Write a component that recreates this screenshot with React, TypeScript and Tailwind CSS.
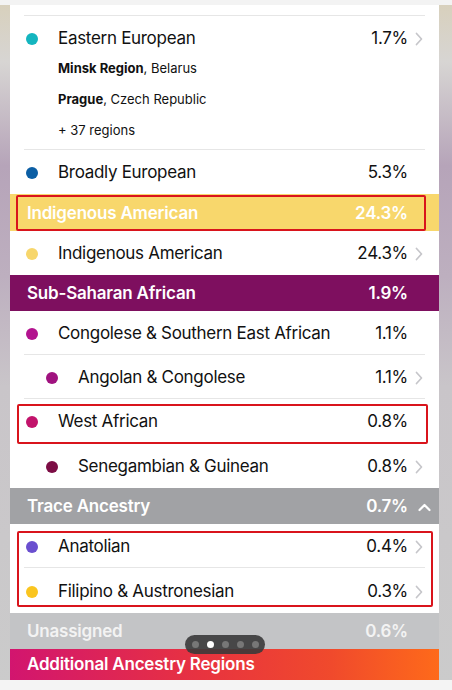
type Row = {
  name: string;
  pct: string;
  dot: string;
  indent?: boolean;
  chevron?: boolean;
  line?: boolean;
  tall?: boolean;
};

function Dot({ color }: { color: string }) {
  return <span className="w-[12px] h-[12px] min-w-[12px] rounded-full shrink-0" style={{ backgroundColor: color }} />;
}

function Chevron() {
  return (
    <svg width="8" height="14" viewBox="0 0 8 14" fill="none">
      <polyline points="1.5,1.5 6.5,7 1.5,12.5" stroke="#c6c6ca" strokeWidth="1.7" strokeLinecap="round" strokeLinejoin="round" />
    </svg>
  );
}

function Pct({ value, chevron }: { value: string; chevron?: boolean }) {
  return (
    <div className="flex items-center ml-auto">
      <span className="text-[17px] tracking-[-0.3px] text-[#111]">{value}</span>
      <span className="w-[31px] flex items-center pl-[7px]">{chevron && <Chevron />}</span>
    </div>
  );
}

function RegionRow({ row }: { row: Row }) {
  return (
    <div className={`relative flex items-center pt-[2px] ${row.tall ? "h-[45px]" : "h-[44px]"}`}>
      <div className={`flex items-center gap-[20px] ${row.indent ? "pl-[36px]" : "pl-[16px]"}`}>
        <Dot color={row.dot} />
        <span className="text-[17px] tracking-[-0.3px] text-[#111]">{row.name}</span>
      </div>
      <Pct value={row.pct} chevron={row.chevron} />
      {row.line && <div className="absolute left-[14px] right-[14px] bottom-0 h-px bg-[#e6e6e6]" />}
    </div>
  );
}

function Band({
  name,
  pct,
  className,
  textClass = "text-white",
  up,
}: {
  name: string;
  pct: string;
  className: string;
  textClass?: string;
  up?: boolean;
}) {
  return (
    <div className={`flex items-center pl-[17px] pt-[2px] ${className}`}>
      <span className={`text-[17px] font-semibold tracking-[-0.2px] ${textClass}`}>{name}</span>
      <div className="flex items-center ml-auto">
        <span className={`text-[17px] font-semibold tracking-[-0.2px] ${textClass}`}>{pct}</span>
        <span className="w-[31px] flex items-center pl-[10px]">
          {up && (
            <svg width="13" height="9" viewBox="0 0 13 9" fill="none">
              <polyline points="1.5,7 6.5,2 11.5,7" stroke="#fff" strokeWidth="2.2" strokeLinecap="round" strokeLinejoin="round" />
            </svg>
          )}
        </span>
      </div>
    </div>
  );
}

function RedBox({ className }: { className: string }) {
  return <div className={`absolute border-2 border-[#d9141c] rounded-[2px] pointer-events-none ${className}`} />;
}

export default function App() {
  return (
    <div
      className="relative w-[452px] h-[690px] overflow-hidden flex flex-col bg-[linear-gradient(180deg,#d8d0bb_0%,#d7d5d3_9%,#b6a4b9_24%,#bdafbf_40%,#c9c5c9_56%,#cbcbcb_100%)]"
      style={{ fontFamily: "Inter, 'Liberation Sans', sans-serif" }}
    >
      <div className="h-[5px] bg-[#f3f3f3] shrink-0" />
      <div className="flex-1 pl-[10px] pr-[13px] flex flex-col">
        <div className="bg-white flex flex-col flex-1">
          <div className="h-[10px]" />
          <div className="mx-[14px] h-px bg-[#e6e6e6]" />

          {/* Eastern European */}
          <div className="relative">
            <div className="h-[44px] flex items-center pt-[2px]">
              <div className="flex items-center pl-[16px] gap-[20px]">
                <Dot color="#14b5bf" />
                <span className="text-[17px] tracking-[-0.3px] text-[#111]">Eastern European</span>
              </div>
              <Pct value="1.7%" chevron />
            </div>
            <div className="pl-[48px] flex flex-col gap-[15px] pb-[11px] text-[13px] leading-[16px] text-[#111]">
              <div>
                <span className="font-bold">Minsk Region</span>, Belarus
              </div>
              <div>
                <span className="font-bold">Prague</span>, Czech Republic
              </div>
              <div>+ 37 regions</div>
            </div>
            <div className="mx-[14px] h-px bg-[#e6e6e6]" />
          </div>

          <RegionRow row={{ name: "Broadly European", pct: "5.3%", dot: "#0b5ea4" }} />

          <div className="relative">
            <Band name="Indigenous American" pct="24.3%" className="bg-[#f8d76c] h-[37px]" />
            <RedBox className="left-[6px] w-[410px] top-[1px] bottom-0" />
          </div>
          <RegionRow row={{ name: "Indigenous American", pct: "24.3%", dot: "#f7d66b", chevron: true }} />

          <Band name="Sub-Saharan African" pct="1.9%" className="bg-[#7e0f5f] h-[36px]" />
          <RegionRow row={{ name: "Congolese & Southern East African", pct: "1.1%", dot: "#b3138f", line: true }} />
          <RegionRow row={{ name: "Angolan & Congolese", pct: "1.1%", dot: "#a0127f", indent: true, chevron: true, line: true }} />
          <div className="relative">
            <RegionRow row={{ name: "West African", pct: "0.8%", dot: "#c2136b" }} />
            <RedBox className="left-[7px] w-[411px] top-[5px] h-[40px]" />
          </div>
          <RegionRow row={{ name: "Senegambian & Guinean", pct: "0.8%", dot: "#7c0d45", indent: true, chevron: true, tall: true }} />

          <Band name="Trace Ancestry" pct="0.7%" className="bg-[#a1a2a5] h-[36px]" up />
          <div className="relative">
            <RegionRow row={{ name: "Anatolian", pct: "0.4%", dot: "#6a4fcf", chevron: true, line: true }} />
            <RegionRow row={{ name: "Filipino & Austronesian", pct: "0.3%", dot: "#fac51f", chevron: true, tall: true }} />
            <RedBox className="left-[7px] w-[416px] top-[7px] h-[76px]" />
          </div>

          <Band name="Unassigned" pct="0.6%" className="bg-[#c3c4c6] h-[36px]" textClass="text-[#f3f3f3]" />
          <div className="flex-1 flex items-center pl-[17px] bg-[linear-gradient(90deg,#d2156f_0%,#e8333f_45%,#f04a2c_75%,#fe6a1a_100%)]">
            <span className="text-[17px] font-semibold tracking-[-0.2px] text-white">Additional Ancestry Regions</span>
          </div>
        </div>
      </div>
      <div className="h-[10px] bg-[#f4f4f4] shrink-0" />

      <div className="absolute left-[185px] top-[635px] w-[80px] h-[19px] rounded-full bg-[#3a3a3a]/90 flex items-center justify-center gap-[8px]">
        <span className="w-[7px] h-[7px] rounded-full bg-[#777]" />
        <span className="w-[7px] h-[7px] rounded-full bg-white" />
        <span className="w-[7px] h-[7px] rounded-full bg-[#777]" />
        <span className="w-[7px] h-[7px] rounded-full bg-[#777]" />
        <span className="w-[7px] h-[7px] rounded-full bg-[#777]" />
      </div>
    </div>
  );
}
